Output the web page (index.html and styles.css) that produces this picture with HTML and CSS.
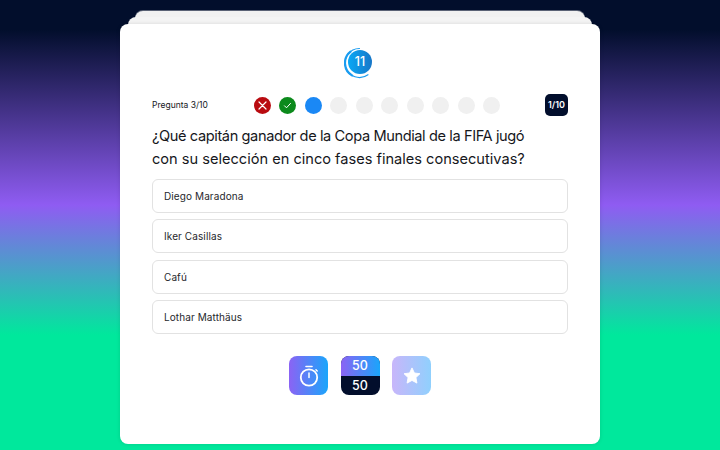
FILE: index.html
```html
<!DOCTYPE html>
<html lang="es">
<head>
<meta charset="utf-8">
<title>Quiz</title>
<link rel="stylesheet" href="styles.css">
</head>
<body>
<main class="stack">
  <div class="back back-2"></div>
  <div class="back back-1"></div>
  <section class="card">
    <div class="timer">
      <svg class="timer-ring" width="32" height="34" viewBox="0 0 32 34" fill="none" stroke="#1a9cf0" stroke-linecap="round">
        <path d="M15.500 1.500 A14.500 14.500 0 1 0 24 27.700" stroke-width="1.100"/>
        <path d="M6.500 4.600 A14.500 14.500 0 0 0 8 28.400" stroke-width="2.200"/>
      </svg>
      <span class="timer-num">11</span>
    </div>
    <div class="progress">
      <span class="label">Pregunta 3/10</span>
      <div class="dots">
        <span class="dot dot-wrong">
          <svg width="9" height="9" viewBox="0 0 9 9"><path d="M1 1l7 7M8 1l-7 7" stroke="#fff" stroke-width="1.200" stroke-linecap="round"/></svg>
        </span>
        <span class="dot dot-right">
          <svg width="9" height="9" viewBox="0 0 9 9"><path d="M1.500 4.800l2 2 4-4.400" fill="none" stroke="#fff" stroke-width="1" stroke-linecap="round" stroke-linejoin="round"/></svg>
        </span>
        <span class="dot dot-current"></span>
        <span class="dot"></span>
        <span class="dot"></span>
        <span class="dot"></span>
        <span class="dot"></span>
        <span class="dot"></span>
        <span class="dot"></span>
        <span class="dot"></span>
      </div>
      <span class="chip">1/10</span>
    </div>
    <h1 class="question"><span class="line line-tight">¿Qué capitán ganador de la Copa Mundial de la FIFA jugó</span> <span class="line">con su selección en cinco fases finales consecutivas?</span></h1>
    <div class="options">
      <button class="option">Diego Maradona</button>
      <button class="option">Iker Casillas</button>
      <button class="option">Cafú</button>
      <button class="option">Lothar Matthäus</button>
    </div>
    <div class="powers">
      <div class="power power-time">
        <svg width="22" height="24" viewBox="0 0 22 24" fill="none" stroke="#fff" stroke-linecap="round">
          <circle cx="11" cy="13.500" r="8.200" stroke-width="1.800"/>
          <path d="M8 2.500h6" stroke-width="1.600"/>
          <path d="M11 9v4.500" stroke-width="1.500"/>
          <path d="M18 5.800l1.200 1.200" stroke-width="1.500"/>
        </svg>
      </div>
      <div class="power power-half">
        <span class="half half-top">50</span>
        <span class="half half-bottom">50</span>
      </div>
      <div class="power power-star">
        <svg width="18" height="17" viewBox="0 0 20 19"><path d="M10 1l2.700 5.700 6.200.8-4.500 4.300 1.100 6.200L10 15l-5.500 3 1.100-6.200L1.100 7.500l6.200-.8z" fill="#fff" stroke="#fff" stroke-width="1" stroke-linejoin="round"/></svg>
      </div>
    </div>
  </section>
</main>
</body>
</html>
```
FILE: styles.css
```css
* { box-sizing: border-box; }

html, body { height: 100%; }

body {
  margin: 0;
  height: 450px;
  overflow: hidden;
  font-family: "Inter", "Liberation Sans", sans-serif;
  color: #16171c;
  background: linear-gradient(180deg, #020e2c 0, #020e2c 30px, #8f5cf2 205px, #00e89c 335px, #00e89c 450px);
}

.stack {
  position: relative;
  width: 480px;
  margin: 0 auto;
  padding-top: 24px;
}

.back {
  position: absolute;
  background: #f1f1f1;
  border-radius: 8px;
  height: 60px;
}

.back-2 { top: 11px; left: 15px; right: 15px; box-shadow: 0 -1px 0 rgba(255,255,255,.35); }
.back-1 { top: 17px; left: 8px; right: 8px; background: #f4f4f4; }

.card {
  position: relative;
  height: 420px;
  background: #fff;
  border-radius: 8px;
  padding: 23px 32px 0;
  box-shadow: 0 0 4px rgba(0,0,0,.12);
}

.timer {
  position: relative;
  width: 32px;
  height: 34px;
  margin: 0 auto;
}

.timer-ring { position: absolute; top: 0; left: 0; }

.timer-num {
  position: absolute;
  top: 3px;
  left: 4px;
  width: 24px;
  height: 24px;
  border-radius: 50%;
  background: linear-gradient(90deg, #0aa8f5, #1877c8);
  color: #fff;
  font-size: 12.500px;
  font-weight: 500;
  line-height: 24px;
  text-align: center;
}

.progress {
  display: flex;
  align-items: center;
  height: 22px;
  margin-top: 13px;
}

.label {
  width: 101.500px;
  font-size: 8.500px;
  font-weight: 400;
  white-space: nowrap;
}

.dots {
  display: flex;
  gap: 8.500px;
  flex: 1;
}

.dot {
  display: flex;
  align-items: center;
  justify-content: center;
  width: 17px;
  height: 17px;
  border-radius: 50%;
  background: #f0f0f0;
}

.dot-wrong { background: #b90b10; }
.dot-right { background: #0c8a1c; }
.dot-current { background: #1a88f5; }

.chip {
  width: 23px;
  height: 22px;
  border-radius: 5px;
  background: #020e2c;
  color: #fff;
  font-size: 9px;
  font-weight: 600;
  line-height: 22px;
  text-align: center;
}

.question {
  margin: 9px 0 0;
  font-size: 14.600px;
  font-weight: 400;
  line-height: 22.500px;
}

.line { display: block; white-space: nowrap; }
.line-tight { letter-spacing: -.4px; }

.options {
  display: flex;
  flex-direction: column;
  gap: 6.500px;
  margin-top: 8.500px;
}

.option {
  height: 34px;
  padding: 0 11px;
  background: #fff;
  border: 1px solid #e2e2e2;
  border-radius: 6px;
  color: #26272c;
  font-family: inherit;
  font-size: 10px;
  letter-spacing: .1px;
  text-align: left;
}

.powers {
  display: flex;
  justify-content: center;
  gap: 12.500px;
  margin-top: 22px;
}

.power {
  display: flex;
  align-items: center;
  justify-content: center;
  width: 39px;
  height: 39px;
  border-radius: 8px;
  overflow: hidden;
}

.power-time { background: linear-gradient(90deg, #8b63f4, #1aa5fb); }

.power-half {
  flex-direction: column;
  background: #020e2c;
}

.half {
  display: block;
  width: 100%;
  height: 50%;
  color: #fff;
  font-size: 12.500px;
  font-weight: 500;
  line-height: 20px;
  text-align: center;
}

.half-top { background: linear-gradient(90deg, #8b63f4, #1aa5fb); }

.power-star {
  background: linear-gradient(90deg, #c8b6fa, #90d0fd);
}
```
